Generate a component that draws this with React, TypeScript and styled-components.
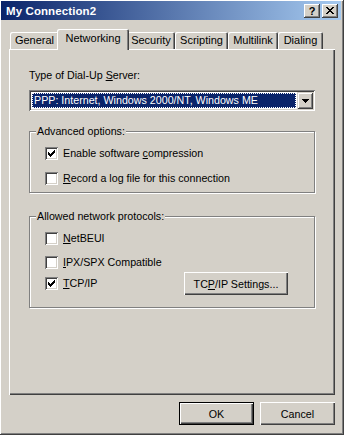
import styled, { createGlobalStyle } from "styled-components";

const GlobalStyle = createGlobalStyle`
  html, body {
    margin: 0;
    padding: 0;
    background: #d4d0c8;
  }
  body {
    font-family: "Liberation Sans", Arial, sans-serif;
    font-size: 10.7px;
    color: #000;
  }
`;

const Window = styled.div`
  width: 344px;
  height: 435px;
  box-sizing: border-box;
  background: #d4d0c8;
  padding: 1px 3px 3px 1px;
  display: flex;
  flex-direction: column;
  box-shadow: inset -1px -1px #404040, inset 1px 1px #ffffff,
    inset -2px -2px #808080;
`;

const TitleBar = styled.div`
  height: 19px;
  display: flex;
  align-items: center;
  padding: 0 3px 0 5px;
  background: linear-gradient(to right, #0a246a, #a6caf0);
  color: #fff;
`;

const TitleText = styled.div`
  flex: 1;
  font-weight: bold;
  font-size: 11.5px;
  letter-spacing: 0.1px;
`;

const CaptionButton = styled.div<{ $gap?: number }>`
  width: 16px;
  height: 14px;
  box-sizing: border-box;
  margin-left: ${(p) => p.$gap ?? 0}px;
  background: #d4d0c8;
  color: #000;
  display: flex;
  align-items: center;
  justify-content: center;
  font-weight: bold;
  font-size: 11px;
  box-shadow: inset -1px -1px #404040, inset 1px 1px #ffffff,
    inset -2px -2px #808080;
`;

const Body = styled.div`
  display: flex;
  flex-direction: column;
  padding: 9px 0 0 8px;
`;

const TabStrip = styled.div`
  height: 20px;
  display: flex;
  align-items: flex-end;
  padding-left: 1px;
  position: relative;
  z-index: 1;
`;

const Tab = styled.div<{ $w: number; $active?: boolean }>`
  width: ${(p) => p.$w + (p.$active ? 4 : 0)}px;
  height: ${(p) => (p.$active ? 21 : 17)}px;
  margin: 0 ${(p) => (p.$active ? -2 : 0)}px
    ${(p) => (p.$active ? -1 : 0)}px;
  box-sizing: border-box;
  background: #d4d0c8;
  display: flex;
  justify-content: center;
  padding-top: ${(p) => (p.$active ? 3 : 2)}px;
  font-size: 11px;
  border-radius: 2px 2px 0 0;
  box-shadow: inset 1px 1px #ffffff, inset -1px 0 #404040,
    inset -2px 0 #808080;
  position: relative;
  z-index: ${(p) => (p.$active ? 2 : 0)};
`;

const Panel = styled.div`
  width: 326px;
  height: 346px;
  box-sizing: border-box;
  padding: 20px 20px 0 20px;
  display: flex;
  flex-direction: column;
  box-shadow: inset 1px 1px #ffffff, inset -1px -1px #404040,
    inset -2px -2px #808080;
`;

const FieldLabel = styled.div`
  height: 13px;
  line-height: 13px;
  margin-bottom: 8px;
`;

const Combo = styled.div`
  height: 21px;
  box-sizing: border-box;
  background: #fff;
  padding: 2px;
  display: flex;
  box-shadow: inset 1px 1px #808080, inset -1px -1px #ffffff,
    inset 2px 2px #404040, inset -2px -2px #d4d0c8;
`;

const ComboValue = styled.div`
  flex: 1;
  margin: 1px;
  background: #0a246a;
  color: #fff;
  outline: 1px dotted #ffffff;
  outline-offset: -1px;
  padding-left: 2px;
  line-height: 15px;
  white-space: nowrap;
`;

const DropButton = styled.div`
  width: 16px;
  box-sizing: border-box;
  background: #d4d0c8;
  display: flex;
  align-items: center;
  justify-content: center;
  box-shadow: inset 1px 1px #d4d0c8, inset -1px -1px #404040,
    inset 2px 2px #ffffff, inset -2px -2px #808080;
`;

const GroupBox = styled.div<{ $top: number; $bottom: number }>`
  margin-top: ${(p) => p.$top}px;
  width: 286px;
  box-sizing: border-box;
  border: 1px solid #808080;
  box-shadow: 1px 1px 0 #ffffff, inset 1px 1px 0 #ffffff;
  padding-bottom: ${(p) => p.$bottom}px;
  display: flex;
  flex-direction: column;
`;

const GroupLabel = styled.div`
  align-self: flex-start;
  margin: -7px 0 0 6px;
  padding: 0 1px;
  height: 13px;
  line-height: 13px;
  background: #d4d0c8;
`;

const CheckRow = styled.div<{ $top: number }>`
  margin-top: ${(p) => p.$top}px;
  padding-left: 15px;
  display: flex;
  align-items: center;
`;

const CheckItem = styled.label<{ $w?: number }>`
  display: flex;
  align-items: center;
  gap: 5px;
  width: ${(p) => (p.$w ? `${p.$w}px` : "auto")};
  height: 13px;
  line-height: 13px;
`;

const Box = styled.span`
  width: 13px;
  height: 13px;
  box-sizing: border-box;
  background: #fff;
  display: flex;
  align-items: center;
  justify-content: center;
  flex-shrink: 0;
  box-shadow: inset 1px 1px #808080, inset -1px -1px #ffffff,
    inset 2px 2px #404040, inset -2px -2px #d4d0c8;
`;

const PushButton = styled.div<{ $w: number; $default?: boolean }>`
  width: ${(p) => p.$w}px;
  height: 23px;
  box-sizing: border-box;
  display: flex;
  align-items: center;
  justify-content: center;
  background: #d4d0c8;
  border: ${(p) => (p.$default ? "1px solid #000" : "none")};
  box-shadow: inset 1px 1px #ffffff, inset -1px -1px #404040,
    inset -2px -2px #808080;
`;

const ButtonRow = styled.div`
  width: 326px;
  margin-top: 7px;
  display: flex;
  justify-content: flex-end;
  gap: 6px;
`;

const CheckMark = () => (
  <svg width="7" height="7" viewBox="0 0 7 7" shapeRendering="crispEdges">
    <path d="M0 2h1v1h1v1h1v-1h1v-1h1v-1h1v-1h1v3h-1v1h-1v1h-1v1h-1v1h-1v-1h-1v-1h-1z" fill="#000" />
  </svg>
);

function Check({ checked }: { checked?: boolean }) {
  return <Box>{checked && <CheckMark />}</Box>;
}

const tabs = [
  { name: "General", w: 49 },
  { name: "Networking", w: 68, active: true },
  { name: "Security", w: 48 },
  { name: "Scripting", w: 53 },
  { name: "Multilink", w: 50 },
  { name: "Dialing", w: 45 },
];

export default function App() {
  return (
    <>
      <GlobalStyle />
      <Window>
        <TitleBar>
          <TitleText>My Connection2</TitleText>
          <CaptionButton>?</CaptionButton>
          <CaptionButton $gap={2}>
            <svg width="8" height="7" viewBox="0 0 8 7" shapeRendering="crispEdges">
              <path d="M0 0h2l2 2.5 2-2.5h2l-3 3.5 3 3.5h-2l-2-2.5-2 2.5h-2l3-3.5z" fill="#000" />
            </svg>
          </CaptionButton>
        </TitleBar>
        <Body>
          <TabStrip>
            {tabs.map((t) => (
              <Tab key={t.name} $w={t.w} $active={t.active}>
                {t.name}
              </Tab>
            ))}
          </TabStrip>
          <Panel>
            <FieldLabel>
              Type of Dial-Up <u>S</u>erver:
            </FieldLabel>
            <Combo>
              <ComboValue>PPP: Internet, Windows 2000/NT, Windows ME</ComboValue>
              <DropButton>
                <svg width="7" height="4" viewBox="0 0 7 4" shapeRendering="crispEdges">
                  <path d="M0 0h7l-3.5 4z" fill="#000" />
                </svg>
              </DropButton>
            </Combo>

            <GroupBox $top={20} $bottom={7}>
              <GroupLabel>Advanced options:</GroupLabel>
              <CheckRow $top={9}>
                <CheckItem>
                  <Check checked />
                  <span>
                    Enable software <u>c</u>ompression
                  </span>
                </CheckItem>
              </CheckRow>
              <CheckRow $top={12}>
                <CheckItem>
                  <Check />
                  <span>
                    <u>R</u>ecord a log file for this connection
                  </span>
                </CheckItem>
              </CheckRow>
            </GroupBox>

            <GroupBox $top={23} $bottom={12}>
              <GroupLabel>Allowed network protocols:</GroupLabel>
              <CheckRow $top={9}>
                <CheckItem>
                  <Check />
                  <span>
                    <u>N</u>etBEUI
                  </span>
                </CheckItem>
              </CheckRow>
              <CheckRow $top={11}>
                <CheckItem>
                  <Check />
                  <span>
                    <u>I</u>PX/SPX Compatible
                  </span>
                </CheckItem>
              </CheckRow>
              <CheckRow $top={3}>
                <CheckItem $w={139}>
                  <Check checked />
                  <span>
                    <u>T</u>CP/IP
                  </span>
                </CheckItem>
                <PushButton $w={104}>
                  <span>
                    TC<u>P</u>/IP Settings...
                  </span>
                </PushButton>
              </CheckRow>
            </GroupBox>
          </Panel>
          <ButtonRow>
            <PushButton $w={75} $default>
              OK
            </PushButton>
            <PushButton $w={75}>Cancel</PushButton>
          </ButtonRow>
        </Body>
      </Window>
    </>
  );
}
